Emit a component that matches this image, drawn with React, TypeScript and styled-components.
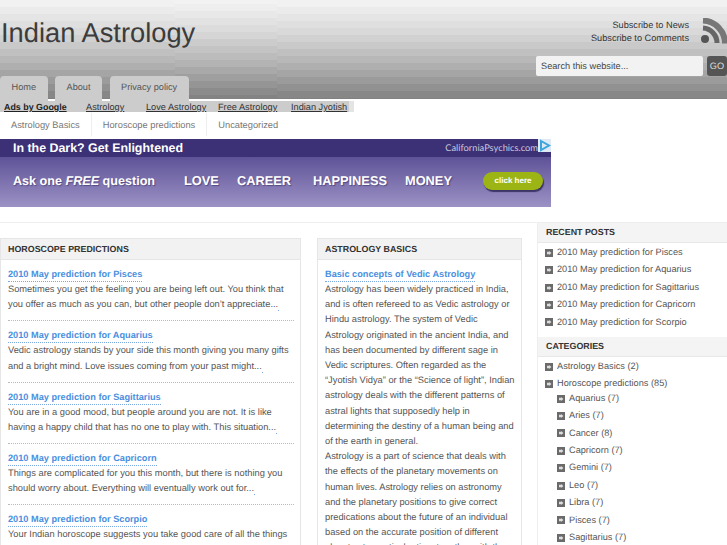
import styled, { createGlobalStyle } from "styled-components";

const GlobalStyle = createGlobalStyle`
    html, body {
        margin: 0;
        padding: 0;
        background: #fff;
        overflow: hidden;
    }
    body {
        font-family: "Liberation Sans", Arial, sans-serif;
        font-size: 9.2px;
        color: #555;
        text-rendering: geometricPrecision;
    }
    a {
        color: inherit;
    }
`;

const bandGrey = (y: number) => {
    const anchors = [[0, 244], [33, 216], [66, 176], [99, 128]];
    for (let i = 1; i < anchors.length; i++) {
        if (y <= anchors[i][0]) {
            const [y0, g0] = anchors[i - 1];
            const [y1, g1] = anchors[i];
            return Math.round(g0 + ((g1 - g0) * (y - y0)) / (y1 - y0));
        }
    }
    return 128;
};

// the header background is a stack of flat grey bands
const headerBands = (offset: number) => {
    const stops: string[] = [];
    let y = -offset;
    while (y < 99) {
        const from = Math.max(y, 0);
        const to = Math.min(y + 7, 99);
        const g = bandGrey((from + to) / 2);
        stops.push(`rgb(${g},${g},${g}) ${from}px ${to}px`);
        y += 7;
    }
    return `linear-gradient(to bottom, ${stops.join(", ")})`;
};

const Page = styled.div`
    width: 727px;
    height: 545px;
    overflow: hidden;
`;

const Header = styled.header`
    height: 99px;
    display: flex;
    justify-content: space-between;
    background: ${headerBands(3)} 175px 0 / 102px 99px no-repeat, ${headerBands(0)};
`;

const Brand = styled.div`
    display: flex;
    flex-direction: column;
    justify-content: space-between;
`;

const SiteTitle = styled.h1`
    margin: 0;
    padding: 15px 0 0 1px;
    font-size: 27.3px;
    line-height: 36px;
    font-weight: normal;
    color: #3c3c3c;
`;

const Tabs = styled.nav`
    display: flex;
    gap: 7.5px;
    height: 23px;
`;

const Tab = styled.a`
    height: 25px;
    padding: 0 11.5px;
    line-height: 23px;
    background: #ccc;
    border-radius: 4px 4px 0 0;
    color: #555;
    font-size: 9.2px;
`;

const HeaderRight = styled.div`
    display: flex;
    flex-direction: column;
    align-items: flex-end;
    padding-top: 19px;
`;

const Subscribe = styled.div`
    display: flex;
    gap: 11px;
    height: 26px;
`;

const SubscribeLinks = styled.div`
    text-align: right;
    line-height: 13px;
    color: #333;
    font-size: 9.2px;
`;

const Rss = styled.svg`
    display: block;
    width: 27px;
    height: 27px;
    margin-top: -1px;
`;

const Search = styled.form`
    display: flex;
    gap: 4px;
    margin-top: 11px;
`;

const SearchBox = styled.div`
    width: 162px;
    height: 20px;
    padding-left: 5px;
    background: #f2f2f2;
    border-radius: 2px;
    line-height: 20px;
    color: #444;
    font-size: 9.2px;
`;

const GoButton = styled.div`
    width: 20px;
    height: 20px;
    background: #555;
    border-radius: 3px;
    color: #ddd;
    font-size: 9.2px;
    line-height: 20px;
    text-align: center;
`;

const AdsRow = styled.div`
    margin-top: 2px;
    width: 349px;
    height: 11px;
    display: flex;
    background: #ccc;
    border-right: 5px solid #e4e4e4;
    font-size: 9.2px;
    line-height: 12px;
    color: #333;
    white-space: nowrap;
`;

const AdHead = styled.a`
    margin-left: 4px;
    width: 82px;
    font-size: 8.9px;
    font-weight: bold;
    color: #222;
    text-decoration: underline;
`;

const AdLink = styled.a<{ $w: number }>`
    width: ${(p) => p.$w}px;
    text-decoration: underline;
`;

const SubNav = styled.nav`
    height: 27px;
    display: flex;
`;

const SubItem = styled.a`
    padding: 0 11px;
    height: 23px;
    margin-top: 1px;
    line-height: 24px;
    font-size: 9.3px;
    color: #777;
    border-right: 1px solid #eee;

    &:last-child {
        border-right: 0;
    }
`;

const Banner = styled.div`
    width: 551px;
    height: 68px;
    color: #fff;
    font-weight: bold;
`;

const BannerTop = styled.div`
    height: 18px;
    padding-left: 13px;
    display: flex;
    justify-content: space-between;
    background: #3c3176;
    font-size: 12.4px;
    line-height: 18px;
`;

const BannerSite = styled.span`
    display: flex;
    align-items: flex-start;
    font-family: Lato, sans-serif;
    font-weight: normal;
    font-size: 9.3px;
    color: #c9c6dd;
`;

const BannerBody = styled.div`
    height: 50px;
    padding-bottom: 3px;
    box-sizing: border-box;
    display: flex;
    align-items: center;
    background: linear-gradient(to bottom, #5f5398, #9c92c5);
    font-size: 12.8px;
    text-shadow: 1px 1px 1px rgba(40, 30, 90, 0.5);
`;

const AskText = styled.span`
    margin-left: 13px;
    width: 171px;
    font-size: 12.6px;
`;

const BannerWord = styled.span<{ $w: number }>`
    width: ${(p) => p.$w}px;
`;

const ClickHere = styled.span`
    width: 60px;
    height: 18px;
    border-radius: 9px;
    background: #9cb514;
    box-shadow: 1px 2px 1px #3c3466;
    font-size: 8px;
    line-height: 17px;
    text-align: center;
    text-shadow: none;
`;

const Content = styled.main`
    margin-top: 15px;
    display: grid;
    grid-template-columns: 301px 206px 190px;
    column-gap: 15px;
    border-top: 1px solid #eee;
`;

const Column = styled.section`
    margin-top: 15px;
    border: 1px solid #e6e6e6;
    border-width: 1px 1px 0 1px;
    box-sizing: border-box;
`;

const MiddleColumn = styled(Column)`
    margin-left: 1px;
`;

const BoxTitle = styled.h3`
    margin: 0;
    height: 20px;
    padding-left: 7px;
    background: #f2f2f2;
    border-bottom: 1px solid #e6e6e6;
    font-size: 8.9px;
    line-height: 20px;
    color: #333;
    text-transform: uppercase;
`;

const BoxBody = styled.div`
    padding: 8px 6px 0 7px;
`;

const Post = styled.article`
    padding-bottom: 8px;
    margin-bottom: 7.9px;
    border-bottom: 1px dotted #bbb;
`;

const PostTitle = styled.a`
    display: inline-block;
    font-size: 9.2px;
    font-weight: bold;
    line-height: 13px;
    color: #4a8fe0;
    border-bottom: 1px dotted #7aa8e0;
`;

const Text = styled.p`
    margin: 0;
    font-size: 9.3px;
    line-height: 15.2px;
    color: #555;
`;

// empty "read more" link, only its dotted underline shows
const MoreDot = styled.span`
    display: inline-block;
    width: 1px;
    height: 1px;
    vertical-align: -4px;
    background: #7aa8e0;
`;

const Sidebar = styled.aside`
    border-left: 1px solid #eee;
`;

const SideTitle = styled.h3`
    margin: 0;
    height: 19px;
    padding-left: 8px;
    background: #f4f4f4;
    border-bottom: 1px solid #e8e8e8;
    font-size: 8.9px;
    line-height: 18px;
    color: #333;
`;

const SideList = styled.ul<{ $nested?: boolean }>`
    list-style: none;
    margin: ${(p) => (p.$nested ? "-3px 0 0" : "0")};
    padding: ${(p) => (p.$nested ? "0 0 0 12px" : "1px 0 6px 7px")};
`;

const SideItem = styled.li`
    font-size: 9.2px;
    line-height: 17.4px;
    color: #555;
`;

const SideRow = styled.div`
    display: flex;
    align-items: center;
    gap: 4px;
`;

const Bullet = styled.svg`
    width: 8px;
    height: 8px;
    flex: none;
`;

const Marker = () => (
    <Bullet viewBox="0 0 8 8">
        <rect width="8" height="8" fill="#6a6a6a" />
        <path d="M2 2.8h2.2V2L6.4 4 4.2 6V5.2H2z" fill="#ddd" />
    </Bullet>
);

const posts = [
    ["2010 May prediction for Pisces", "Sometimes you get the feeling you are being left out. You think that you offer as much as you can, but other people don’t appreciate..."],
    ["2010 May prediction for Aquarius", "Vedic astrology stands by your side this month giving you many gifts and a bright mind. Love issues coming from your past might..."],
    ["2010 May prediction for Sagittarius", "You are in a good mood, but people around you are not. It is like having a happy child that has no one to play with. This situation..."],
    ["2010 May prediction for Capricorn", "Things are complicated for you this month, but there is nothing you should worry about. Everything will eventually work out for..."],
    ["2010 May prediction for Scorpio", "Your Indian horoscope suggests you take good care of all the things"],
];

const basics = [
    "Astrology has been widely practiced in India, and is often refereed to as Vedic astrology or Hindu astrology. The system of Vedic Astrology originated in the ancient India, and has been documented by different sage in Vedic scriptures. Often regarded as the “Jyotish Vidya” or the “Science of light”, Indian astrology deals with the different patterns of astral lights that supposedly help in determining the destiny of a human being and of the earth in general.",
    "Astrology is a part of science that deals with the effects of the planetary movements on human lives. Astrology relies on astronomy and the planetary positions to give correct predications about the future of an individual based on the accurate position of different planets at a particular time together with the",
];

const recent = ["Pisces", "Aquarius", "Sagittarius", "Capricorn", "Scorpio"];
const signs = ["Aquarius (7)", "Aries (7)", "Cancer (8)", "Capricorn (7)", "Gemini (7)", "Leo (7)", "Libra (7)", "Pisces (7)", "Sagittarius (7)"];

const App = () => (
    <Page>
        <GlobalStyle />
        <Header>
            <Brand>
                <SiteTitle>Indian Astrology</SiteTitle>
                <Tabs>
                    <Tab>Home</Tab>
                    <Tab>About</Tab>
                    <Tab>Privacy policy</Tab>
                </Tabs>
            </Brand>
            <HeaderRight>
                <Subscribe>
                    <SubscribeLinks>
                        Subscribe to News<br />Subscribe to Comments
                    </SubscribeLinks>
                    <Rss viewBox="0 0 27 27">
                        <circle cx="5" cy="21" r="4" fill="#555" />
                        <path d="M3 10a15 15 0 0 1 14 15" fill="none" stroke="#666" strokeWidth="5" />
                        <path d="M3 2.5a23 23 0 0 1 22 23" fill="none" stroke="#777" strokeWidth="6" />
                    </Rss>
                </Subscribe>
                <Search>
                    <SearchBox>Search this website...</SearchBox>
                    <GoButton>GO</GoButton>
                </Search>
            </HeaderRight>
        </Header>
        <AdsRow>
            <AdHead>Ads by Google</AdHead>
            <AdLink $w={60}>Astrology</AdLink>
            <AdLink $w={72}>Love Astrology</AdLink>
            <AdLink $w={73}>Free Astrology</AdLink>
            <AdLink $w={58}>Indian Jyotish</AdLink>
        </AdsRow>
        <SubNav>
            <SubItem>Astrology Basics</SubItem>
            <SubItem>Horoscope predictions</SubItem>
            <SubItem>Uncategorized</SubItem>
        </SubNav>
        <Banner>
            <BannerTop>
                In the Dark? Get Enlightened
                <BannerSite>
                    CaliforniaPsychics.com
                    <svg width="13" height="13" viewBox="0 0 13 13">
                        <rect width="13" height="13" fill="#dfe9f5" />
                        <path d="M3 2l8 4.5L3 11z" fill="none" stroke="#3aa5dc" strokeWidth="2" />
                    </svg>
                </BannerSite>
            </BannerTop>
            <BannerBody>
                <AskText>Ask one <em>FREE</em> question</AskText>
                <BannerWord $w={53}>LOVE</BannerWord>
                <BannerWord $w={76}>CAREER</BannerWord>
                <BannerWord $w={92}>HAPPINESS</BannerWord>
                <BannerWord $w={78}>MONEY</BannerWord>
                <ClickHere>click here</ClickHere>
            </BannerBody>
        </Banner>
        <Content>
            <Column>
                <BoxTitle>Horoscope predictions</BoxTitle>
                <BoxBody>
                    {posts.map(([title, text], i) => (
                        <Post key={title}>
                            <PostTitle>{title}</PostTitle>
                            <Text>{text}{i < 4 && <MoreDot />}</Text>
                        </Post>
                    ))}
                </BoxBody>
            </Column>
            <MiddleColumn>
                <BoxTitle>Astrology basics</BoxTitle>
                <BoxBody>
                    <PostTitle>Basic concepts of Vedic Astrology</PostTitle>
                    {basics.map((t) => (
                        <Text key={t}>{t}</Text>
                    ))}
                </BoxBody>
            </MiddleColumn>
            <Sidebar>
                <SideTitle>RECENT POSTS</SideTitle>
                <SideList>
                    {recent.map((s) => (
                        <SideItem key={s}>
                            <SideRow><Marker />2010 May prediction for {s}</SideRow>
                        </SideItem>
                    ))}
                </SideList>
                <SideTitle>CATEGORIES</SideTitle>
                <SideList>
                    <SideItem><SideRow><Marker />Astrology Basics (2)</SideRow></SideItem>
                    <SideItem>
                        <SideRow><Marker />Horoscope predictions (85)</SideRow>
                        <SideList $nested>
                            {signs.map((s) => (
                                <SideItem key={s}>
                                    <SideRow><Marker />{s}</SideRow>
                                </SideItem>
                            ))}
                        </SideList>
                    </SideItem>
                </SideList>
            </Sidebar>
        </Content>
    </Page>
);

export default App;
